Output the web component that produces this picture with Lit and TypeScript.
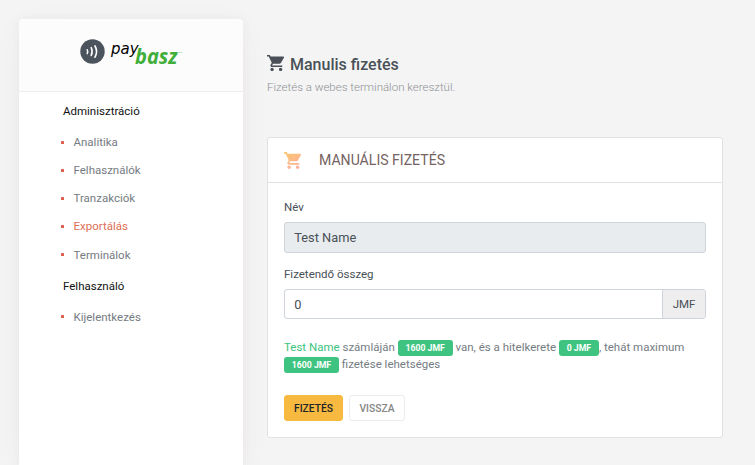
import { LitElement, html, css, svg } from "lit";
import { customElement, property } from "lit/decorators.js";
import { classMap } from "lit/directives/class-map.js";

const CART =
  "M7 18c-1.1 0-1.99.9-1.99 2S5.9 22 7 22s2-.9 2-2-.9-2-2-2zM1 2v2h2l3.6 7.59-1.35 2.45c-.16.28-.25.61-.25.96 0 1.1.9 2 2 2h12v-2H7.42c-.14 0-.25-.11-.25-.25l.03-.12.9-1.63h7.45c.75 0 1.41-.41 1.75-1.03l3.58-6.49A1.003 1.003 0 0 0 20 4H5.21l-.94-2H1zm16 16c-1.1 0-1.99.9-1.99 2s.89 2 1.99 2 2-.9 2-2-.9-2-2-2z";

@customElement("cart-icon")
class CartIcon extends LitElement {
  @property({ type: Boolean }) warm = false;
  static styles = css`
    :host { display: block; }
    svg { display: block; width: 100%; height: 100%; }
  `;
  render() {
    return html`<svg viewBox="1 2 20 20" preserveAspectRatio="none">
      ${this.warm
        ? svg`<defs><linearGradient id="g" x1="0" y1="0" x2="0.6" y2="1">
            <stop offset="0" stop-color="#f8c76e"/><stop offset="1" stop-color="#ffb199"/>
          </linearGradient></defs>`
        : ""}
      <path d=${CART} fill=${this.warm ? "url(#g)" : "#495057"} />
    </svg>`;
  }
}

@customElement("side-nav")
class SideNav extends LitElement {
  static styles = css`
    :host {
      display: block; box-sizing: border-box; background: #fff;
      border-radius: 4px 4px 0 0;
      box-shadow: 0 7px 35px rgba(90, 40, 60, 0.035), 0 0 10px rgba(90, 55, 40, 0.05);
    }
    .brand {
      height: 72px; border-bottom: 1px solid #eee; background: #fcfcfc;
      border-radius: 4px 4px 0 0;
    }
    .brand svg { display: block; width: 224px; height: 72px; }
    .pay { font: italic 16.5px "DejaVu Sans", sans-serif; }
    .basz { font: italic 700 20.5px "Open Sans", sans-serif; }
    .tm { font: 2.5px "Open Sans", sans-serif; }
    nav { padding-left: 42px; }
    h4 {
      margin: 0; padding: 0 0 0 2px; height: 36px; line-height: 39px;
      font-size: 11.5px; font-weight: 400; color: #111;
    }
    h4.second { height: 34px; line-height: 35px; }
    ul { list-style: none; margin: 0; padding: 0; }
    li { display: flex; align-items: center; height: 28.15px; color: #757b82; font-size: 11.5px; }
    li::before {
      content: ""; width: 3px; height: 3px; margin-right: 9.5px;
      background: #d95f4b; border-radius: 0.5px;
    }
    li.active { color: #dd6e56; }
  `;
  private item(label: string, active = false) {
    return html`<li class=${classMap({ active })}>${label}</li>`;
  }
  render() {
    return html`
      <div class="brand">
        <svg viewBox="0 0 224 72">
          <circle cx="73.5" cy="32.5" r="12.2" fill="#4b535c" />
          <g fill="none" stroke="#fff" stroke-linecap="round">
            <path d="M68.2 30.7q1 2 0 4" stroke-width="1.5" />
            <path d="M72.2 28.7q2 3.8 0 7.8" stroke-width="1.6" />
            <path d="M76 27q3.2 5.4 0 11.2" stroke-width="1.7" />
          </g>
          <text class="pay" x="92" y="35" textLength="27.5" lengthAdjust="spacingAndGlyphs">pay</text>
          <text class="basz" x="116" y="44.5" fill="#3faf3a" textLength="42.5" lengthAdjust="spacingAndGlyphs">basz</text>
          <text class="tm" x="159.5" y="34" fill="#3faf3a">TM</text>
        </svg>
      </div>
      <nav>
        <h4>Adminisztráció</h4>
        <ul>
          ${this.item("Analitika")}${this.item("Felhasználók")}${this.item("Tranzakciók")}
          ${this.item("Exportálás", true)}${this.item("Terminálok")}
        </ul>
        <h4 class="second">Felhasználó</h4>
        <ul>${this.item("Kijelentkezés")}</ul>
      </nav>
    `;
  }
}

@customElement("payment-card")
class PaymentCard extends LitElement {
  static styles = css`
    :host {
      display: block; box-sizing: border-box; height: 301px; background: #fff;
      border: 1px solid #dfe1e5; border-radius: 3px;
    }
    header {
      display: flex; align-items: center; height: 44px; padding-left: 16px;
      border-bottom: 1px solid #dfe1e5; color: #74625f; font-size: 14.08px;
    }
    cart-icon { width: 17px; height: 17px; margin-right: 18px; }
    .body { padding: 16px 16px 0; }
    label { display: block; height: 23px; line-height: 17px; font-size: 11.5px; color: #495057; }
    .field {
      display: flex; box-sizing: border-box; height: 31px; border: 1px solid #ced4da;
      border-radius: 3px; font-size: 12.8px; line-height: 29px; color: #495057; overflow: hidden;
    }
    .disabled { background: #e8ecef; margin-bottom: 13px; }
    .amount { height: 30px; line-height: 29px; }
    .value { flex: 1; padding-left: 9.3px; }
    .unit {
      width: 43px; box-sizing: border-box; text-align: center; font-size: 11.5px; line-height: 28px;
      background: #eee; border-left: 1px solid #ced4da;
    }
    p { margin: 20px 0 0; font-size: 11.5px; line-height: 17px; color: #757c83; white-space: nowrap; }
    .name { color: #3ac47d; }
    .badge {
      display: inline-block; box-sizing: border-box; height: 16px; line-height: 16px; padding: 0 7.8px;
      border-radius: 3px; background: #3ec480; color: #fff; font-size: 8.7px; font-weight: 700;
      vertical-align: middle; text-align: center;
    }
    .actions { display: flex; gap: 6px; margin-top: 22px; }
    button {
      height: 26px; padding: 0; border-radius: 3px; font: 500 10.3px Roboto, sans-serif;
    }
    .primary { width: 59px; background: #f7b93f; border: 1px solid #f7b93f; color: #212529; }
    .secondary { width: 56px; background: #fff; border: 1px solid #ececec; color: #868686; }
  `;
  render() {
    return html`
      <header><cart-icon warm></cart-icon>MANUÁLIS FIZETÉS</header>
      <div class="body">
        <label>Név</label>
        <div class="field disabled"><span class="value">Test Name</span></div>
        <label>Fizetendő összeg</label>
        <div class="field amount"><span class="value">0</span><span class="unit">JMF</span></div>
        <p>
          <span class="name">Test Name</span> számláján <span class="badge">1600 JMF</span> van, és a
          hitelkerete <span class="badge">0 JMF</span>, tehát maximum<br />
          <span class="badge">1600 JMF</span> fizetése lehetséges
        </p>
        <div class="actions">
          <button class="primary">FIZETÉS</button><button class="secondary">VISSZA</button>
        </div>
      </div>
    `;
  }
}

@customElement("app-root")
class AppRoot extends LitElement {
  static styles = css`
    :host {
      display: grid; grid-template-columns: 224px 456px; column-gap: 24px; box-sizing: border-box;
      height: 465px; padding: 19px 0 0 19px; overflow: hidden; background: #f4f4f4;
      font-family: Roboto, sans-serif;
    }
    .title {
      display: flex; align-items: center; gap: 6px; height: 20px; margin-top: 35px;
      font-size: 16px; font-weight: 500; color: #495057;
    }
    .title cart-icon { width: 17px; height: 16px; margin-top: -2px; }
    .sub { margin-top: 5px; height: 17px; line-height: 17px; font-size: 11.5px; color: #909294; font-weight: 300; }
    payment-card { margin-top: 41px; }
  `;
  render() {
    return html`
      <side-nav></side-nav>
      <main>
        <div class="title"><cart-icon></cart-icon>Manulis fizetés</div>
        <div class="sub">Fizetés a webes terminálon keresztül.</div>
        <payment-card></payment-card>
      </main>
    `;
  }
}
